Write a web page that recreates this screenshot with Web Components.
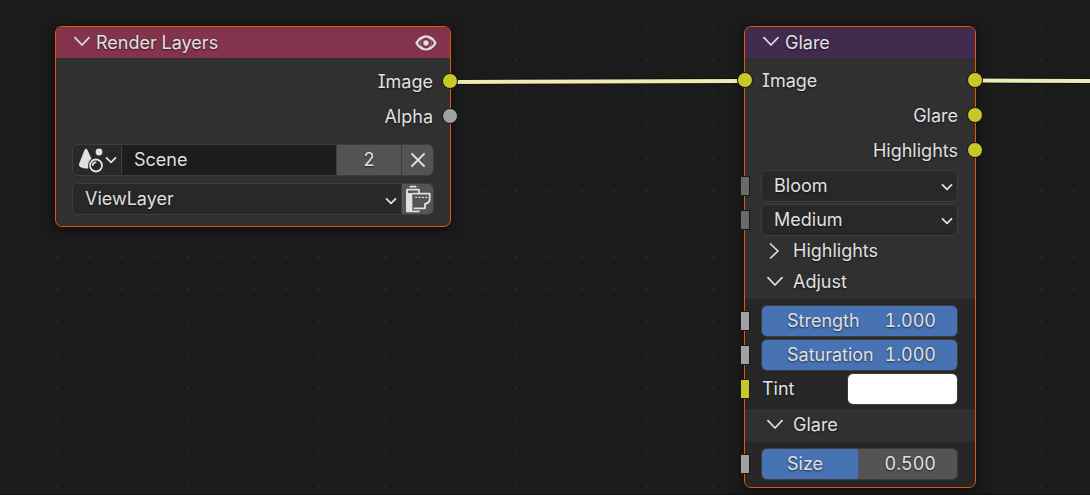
<!DOCTYPE html>
<html lang="en">
<head>
<meta charset="utf-8">
<title>Compositor</title>
<style>
  html { background: #1b1b1b; }
  body {
    margin: 0;
    color: #e0e0e0;
    font: 18px/24px Inter, "Liberation Sans", sans-serif;
    font-feature-settings: "cv08", "tnum";
    --outline: #3d3d3d;
    --field: #282828;
    --button: #545454;
    --accent: #4772b3;
  }
  #render { left: 55px; top: 26px; width: 396px; --head: #83344c; --body-gap: 6px; }
  #glare { left: 744px; top: 26px; width: 232px; --head: #412b4f; --body-gap: 5px; }
</style>
</head>
<body>
<node-canvas>
  <node-card id="render" heading="Render Layers" preview>
    <socket-row side="out" label="Image" color="#c7c729"></socket-row>
    <socket-row side="out" label="Alpha" color="#a1a1a1"></socket-row>
    <field-stack class="wide">
      <scene-picker></scene-picker>
      <layer-picker></layer-picker>
    </field-stack>
  </node-card>

  <node-card id="glare" heading="Glare">
    <socket-row side="both" label="Image" color="#c7c729"></socket-row>
    <socket-row side="out" label="Glare" color="#c7c729"></socket-row>
    <socket-row side="out" label="Highlights" color="#c7c729"></socket-row>
    <field-stack>
      <menu-field label="Type" value="Bloom"></menu-field>
      <menu-field label="Quality" value="Medium"></menu-field>
    </field-stack>
    <panel-section heading="Highlights"></panel-section>
    <panel-section heading="Adjust" open>
      <number-slider label="Strength" value="1.000" fill="100"></number-slider>
      <number-slider label="Saturation" value="1.000" fill="100"></number-slider>
      <color-field label="Tint" value="#ffffff"></color-field>
    </panel-section>
    <panel-section class="last" heading="Glare" open>
      <number-slider label="Size" value="0.500" fill="49"></number-slider>
    </panel-section>
  </node-card>
</node-canvas>

<script>
const base = `
  *, *::before, *::after { box-sizing: border-box; }
  button, input, select { font: inherit; font-feature-settings: inherit; color: inherit; margin: 0; padding: 0; border: 0; background: none; border-radius: 0; outline: 0; appearance: none; text-shadow: inherit; }
  svg { display: block; fill: none; stroke: currentColor; stroke-linecap: round; stroke-linejoin: round; flex: none; }
`;
const chevron = `<svg width="16" height="16" viewBox="0 0 16 16" stroke-width="1.7"><path d="M1 3.600 8 11 15 3.600"/></svg>`;
const smallChevron = `<svg class="caret" width="12" height="8" viewBox="0 0 12 8" stroke-width="1.8"><path d="M1.500 1.800 6 6.300 10.500 1.800"/></svg>`;

function define(name, render) {
  customElements.define(name, class extends HTMLElement {
    constructor() { super(); this.attachShadow({ mode: "open" }); }
    connectedCallback() {
      const t = document.createElement("template");
      t.innerHTML = render(this);
      this.shadowRoot.replaceChildren(t.content.cloneNode(true));
    }
  });
}

define("node-canvas", () => {
  const steps = [0, 33, 66, 98, 131];
  const dots = steps.flatMap(x => steps.map(y => `<rect x="${x}" y="${y}" width="2" height="2"/>`)).join("");
  return `<style>${base}
    :host { display: block; position: relative; min-height: 100vh; overflow: hidden; background: #1b1b1b; border-bottom: 1px solid #111; box-sizing: border-box; }
    .back { position: absolute; inset: 0; width: 100%; height: 100%; }
    ::slotted(*) { position: absolute; }
  </style>
  <svg class="back" aria-hidden="true">
    <defs><pattern id="grid" x="23" y="26" width="164" height="164" patternUnits="userSpaceOnUse"><g fill="#272727" stroke="none">${dots}</g></pattern></defs>
    <rect width="100%" height="100%" fill="url(#grid)" stroke="none"/>
    <g stroke="#111" stroke-width="6"><path d="M450 82 745 81"/><line x1="975" y1="80.500" x2="110%" y2="81.500"/></g>
    <g stroke="#efebb5" stroke-width="4"><path d="M450 82 745 81"/><line x1="975" y1="80.500" x2="110%" y2="81.500"/></g>
  </svg>
  <slot></slot>`;
});

define("node-card", el => `<style>${base}
    :host { display: block; box-sizing: border-box; border: 1px solid #e8550a; border-radius: 7px; background: #303030; box-shadow: 0 2px 10px 1px rgba(0,0,0,.5); text-shadow: 0 1px 2px rgba(0,0,0,.6); }
    header { display: flex; align-items: center; height: 31px; padding: 0 12px 0 18px; background: var(--head); border-radius: 6px 6px 0 0; }
    .toggle { display: flex; align-items: center; gap: 6px; }
    .toggle svg { margin-bottom: 2px; }
    .eye { margin-left: auto; }
    .body { padding-top: var(--body-gap); }
  </style>
  <header>
    <button class="toggle" aria-expanded="true">${chevron}<span>${el.getAttribute("heading")}</span></button>
    ${el.hasAttribute("preview") ? `<button class="eye" aria-label="Toggle preview"><svg width="24" height="18" viewBox="0 0 24 18" stroke="none"><path d="M1.300 9C4 4 7.500 1.600 12 1.600S20 4 22.700 9C20 14 16.500 16.400 12 16.400S4 14 1.300 9Z" fill="currentColor" stroke="none"/><path d="M4 9Q5.300 6.300 7.200 5 5.500 9 7.200 13 5.300 11.700 4 9ZM20 9Q18.700 6.300 16.800 5 18.500 9 16.800 13 18.700 11.700 20 9Z" style="fill:var(--head)" stroke="none"/><circle cx="12" cy="9" r="5.400" style="fill:var(--head)" stroke="none"/><circle cx="12" cy="9" r="2.700" fill="currentColor" stroke="none"/></svg></button>` : ""}
  </header>
  <div class="body"><slot></slot></div>`);

define("socket-row", el => {
  const side = el.getAttribute("side");
  return `<style>${base}
    :host { display: flex; align-items: center; height: 35px; padding: 0 17px; position: relative; justify-content: ${side === "out" ? "flex-end" : "flex-start"}; }
    i { position: absolute; top: 9px; width: 16px; height: 16px; border: 1px solid #151515; border-radius: 50%; background: ${el.getAttribute("color")}; }
    .in { left: -8px; } .out { right: -8px; }
  </style>
  ${side === "both" ? `<i class="in"></i>` : ""}<span>${el.getAttribute("label")}</span><i class="out"></i>`;
});

define("field-stack", () => `<style>${base}
    :host { display: flex; flex-direction: column; gap: 2px; padding: 2px 17px 0 16px; }
    :host(.wide) { gap: 7px; padding: 10px 16px 11px; }
  </style><slot></slot>`);

define("scene-picker", () => `<style>${base}
    :host { display: flex; height: 32px; border: 1px solid var(--outline); border-radius: 6px; overflow: hidden; box-sizing: border-box; }
    button { display: flex; align-items: center; justify-content: center; background: var(--button); border-left: 1px solid var(--outline); }
    .browse { width: 48px; gap: 2px; background: var(--field); border: 0; }
    input { flex: 1; min-width: 0; padding: 0 12px; background: #1d1d1d; border-left: 1px solid var(--outline); }
    .users { width: 65px; } .unlink { width: 32px; }
  </style>
  <button class="browse" aria-label="Browse scene"><svg width="26" height="26" viewBox="0 0 26 26" stroke-width="1.800"><path d="M9 1.500Q8 2 7.500 3L2 17C1.500 20 5 21.500 11 21.500L15 13 10.500 3Q10 2 9 1.500Z" fill="currentColor" stroke="none"/><circle cx="22" cy="5" r="3.400" fill="currentColor" stroke="none"/><circle cx="19" cy="18.500" r="8" fill="#282828" stroke="none"/><circle cx="19" cy="18.500" r="6"/><path d="M15.800 18Q16.200 15.500 18.500 15.300"/></svg>${smallChevron}</button>
  <input type="text" aria-label="Scene name" value="Scene">
  <button class="users">2</button>
  <button class="unlink" aria-label="Unlink scene"><svg width="14" height="14" viewBox="0 0 14 14" stroke-width="1.800"><path d="M1 1 13 13M13 1 1 13"/></svg></button>`);

define("layer-picker", () => `<style>${base}
    :host { display: flex; height: 32px; border: 1px solid var(--outline); border-radius: 6px; overflow: hidden; position: relative; box-sizing: border-box; }
    select { flex: 1; min-width: 0; padding: 0 12px; background: var(--field); }
    .caret { position: absolute; right: 36px; top: 13px; pointer-events: none; }
    button { width: 32px; display: flex; align-items: center; justify-content: center; background: var(--button); border-left: 1px solid var(--outline); }
  </style>
  <select aria-label="View layer"><option>ViewLayer</option></select>${smallChevron}
  <button aria-label="Render layer"><svg width="26" height="28" viewBox="0 0 78 84" stroke-width="5.500"><path d="M16 5H32M6 78V14H42V25M24 26H74V46Q72 54 60 57V70H28M6 79H42"/><path d="M4 24H22V80H4Z" fill="currentColor" stroke="none"/><path d="M32 37H35M42 37H45M52 37H55M62 37H65" stroke-width="4"/></svg></button>`);

const pin = color => `<i class="pin" style="background:${color}"></i>`;
const pinCss = `.pin { position: absolute; left: -21px; top: 6px; width: 10px; height: 20px; border: 1px solid #1a1a1a; }`;

define("menu-field", el => `<style>${base}${pinCss}
    :host { display: block; position: relative; height: 32px; }
    select { display: block; width: 100%; height: 100%; padding: 0 12px; background: var(--field); border: 1px solid var(--outline); border-radius: 6px; }
    .caret { position: absolute; right: 5px; top: 13px; pointer-events: none; }
  </style>${pin("#6a6a6a")}
  <select aria-label="${el.getAttribute("label")}"><option>${el.getAttribute("value")}</option></select>${smallChevron}`);

define("panel-section", el => {
  const open = el.hasAttribute("open");
  return `<style>${base}
    :host { display: block; }
    button { display: flex; align-items: center; gap: 10px; width: 100%; height: ${open ? 33 : 30}px; padding: 0 0 ${open ? 2 : 0}px 22px; text-align: left; }
    ${open ? "" : "button svg { transform: rotate(-90deg); }"}
    .content { display: flex; flex-direction: column; gap: 2px; padding: 6px 17px 4px 16px; background: #272727; }
    :host(.last) .content { padding-bottom: 7px; border-radius: 0 0 6px 6px; }
  </style>
  <button aria-expanded="${open}">${chevron}<span>${el.getAttribute("heading")}</span></button>
  ${open ? `<div class="content"><slot></slot></div>` : ""}`;
});

define("number-slider", el => `<style>${base}${pinCss}
    :host { display: block; position: relative; height: 32px; }
    input { display: block; width: 100%; height: 100%; border: 1px solid var(--outline); border-radius: 6px; background: linear-gradient(to right, var(--accent) ${el.getAttribute("fill")}%, var(--button) 0); }
    input::-webkit-slider-thumb { appearance: none; width: 0; height: 0; }
    .text { position: absolute; inset: 0 22px 0 26px; display: flex; align-items: center; justify-content: space-between; pointer-events: none; }
  </style>${pin("#a1a1a1")}
  <input id="v" type="range" min="0" max="100" value="${el.getAttribute("fill")}">
  <div class="text"><label for="v">${el.getAttribute("label")}</label><output for="v">${el.getAttribute("value")}</output></div>`);

define("color-field", el => `<style>${base}${pinCss}
    :host { display: flex; align-items: center; justify-content: space-between; position: relative; height: 32px; padding-left: 1px; }
    input { width: 111px; height: 32px; border: 1px solid var(--outline); border-radius: 6px; overflow: hidden; background: #fff; }
    input::-webkit-color-swatch-wrapper { padding: 0; }
    input::-webkit-color-swatch { border: 0; }
  </style>${pin("#c7c729")}
  <label for="c">${el.getAttribute("label")}</label><input id="c" type="color" value="${el.getAttribute("value")}">`);
</script>
</body>
</html>
